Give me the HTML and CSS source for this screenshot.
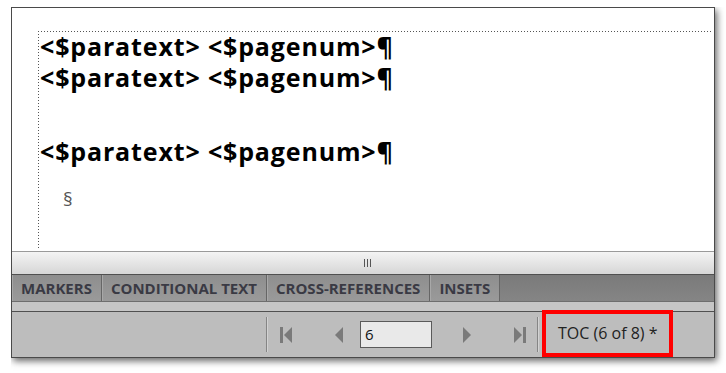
FILE: index.html
```html
<html>
    <head>
        <title>TOC</title>
        <link rel="stylesheet" href="styles.css">
    </head>
    <body>
        <div class="window">
            <div class="doc">
                <div class="frame">
                    <p class="line">&lt;$paratext&gt; &lt;$pagenum&gt;¶</p>
                    <p class="line">&lt;$paratext&gt; &lt;$pagenum&gt;¶</p>
                    <p class="line gap">&lt;$paratext&gt; &lt;$pagenum&gt;¶</p>
                    <p class="section">§</p>
                </div>
            </div>
            <div class="splitter">
                <div class="grip"><span></span><span></span><span></span></div>
            </div>
            <div class="tabs">
                <div class="tab">MARKERS</div>
                <div class="tab">CONDITIONAL TEXT</div>
                <div class="tab">CROSS-REFERENCES</div>
                <div class="tab">INSETS</div>
            </div>
            <div class="strip"></div>
            <div class="footer">
                <div class="sep first-sep"></div>
                <svg class="nav nav-first" width="12" height="16" viewBox="0 0 12 16">
                    <rect x="0" y="0" width="3" height="16" fill="#7a7a7a"/>
                    <polygon points="12,0 12,16 4,8" fill="#7a7a7a"/>
                </svg>
                <svg class="nav nav-prev" width="8" height="16" viewBox="0 0 8 16">
                    <polygon points="8,0 8,16 0,8" fill="#7a7a7a"/>
                </svg>
                <div class="page-input">6</div>
                <svg class="nav nav-next" width="8" height="16" viewBox="0 0 8 16">
                    <polygon points="0,0 0,16 8,8" fill="#7a7a7a"/>
                </svg>
                <svg class="nav nav-last" width="12" height="16" viewBox="0 0 12 16">
                    <polygon points="0,0 0,16 8,8" fill="#7a7a7a"/>
                    <rect x="9" y="0" width="3" height="16" fill="#7a7a7a"/>
                </svg>
                <div class="sep last-sep"></div>
                <div class="doc-name">TOC (6 of 8) *</div>
            </div>
        </div>
    </body>
</html>
```
FILE: styles.css
```css
body{
    margin: 7px 0 0 11px;
    background: #ffffff;
}
.window{
    width: 702px;
    border: 1px solid #4a4a4a;
    box-shadow: 2px 3px 7px rgba(0,0,0,0.6);
    font-family: 'Open Sans', 'Noto Sans', sans-serif;
}
.doc{
    height: 217px;
    background: #ffffff;
    padding: 26px 3px 0 26px;
}
.frame{
    height: 217px;
    padding-left: 2px;
    background:
        repeating-linear-gradient(to right, #555 0 1px, transparent 1px 3px) top left / 100% 1px no-repeat,
        repeating-linear-gradient(to bottom, #555 0 1px, transparent 1px 3px) top left / 1px 100% no-repeat;
}
.line{
    margin: 0;
    font-size: 25px;
    line-height: 31px;
    font-weight: 700;
    letter-spacing: 0.85px;
    color: #000;
    white-space: nowrap;
}
.line:first-child{
    margin-top: -3px;
}
.gap{
    margin-top: 43px;
}
.section{
    margin: 20px 0 0 23px;
    font-size: 19px;
    line-height: 24px;
    color: #555;
}
.splitter{
    height: 22px;
    border-top: 1px solid #9a9a9a;
    background: linear-gradient(#f4f4f4, #d6d6d6);
    display: flex;
    justify-content: center;
    align-items: center;
}
.grip{
    display: flex;
    gap: 2px;
    margin-left: 8px;
}
.grip span{
    width: 1px;
    height: 8px;
    background: #555;
}
.tabs{
    height: 26px;
    border-top: 1px solid #505050;
    border-bottom: 1px solid #6e6e6e;
    background: linear-gradient(#7a7a7a, #858585);
    display: flex;
}
.tab{
    padding: 0 9px;
    display: flex;
    align-items: center;
    font-size: 15px;
    font-weight: 700;
    color: #3a3a44;
    background: linear-gradient(#8e8e8e, #9a9a9a);
    border-right: 1px solid #666;
    box-shadow: inset 1px 0 0 #a8a8a8;
}
.strip{
    height: 9px;
    background: #c6c6c6;
    border-bottom: 1px solid #505050;
}
.footer{
    height: 45px;
    background: #bdbdbd;
    display: flex;
    align-items: center;
}
.sep{
    width: 1px;
    height: 35px;
    background: #858585;
    border-right: 1px solid #d2d2d2;
}
.first-sep{
    margin-left: 254px;
}
.nav-first{
    margin-left: 12px;
}
.nav-prev{
    margin-left: 43px;
}
.page-input{
    margin-left: 17px;
    width: 66px;
    height: 25px;
    border: 1px solid #5a5a5a;
    background: #e9e9e9;
    padding-left: 4px;
    font-size: 15px;
    line-height: 25px;
    color: #111;
}
.nav-next{
    margin-left: 31px;
}
.nav-last{
    margin-left: 43px;
}
.last-sep{
    margin-left: 11px;
}
.doc-name{
    margin: -3px 0 0 3px;
    width: 111px;
    height: 39px;
    border: 4px solid #ff0000;
    padding-left: 12px;
    display: flex;
    align-items: center;
    font-size: 16px;
    color: #222;
}
```
